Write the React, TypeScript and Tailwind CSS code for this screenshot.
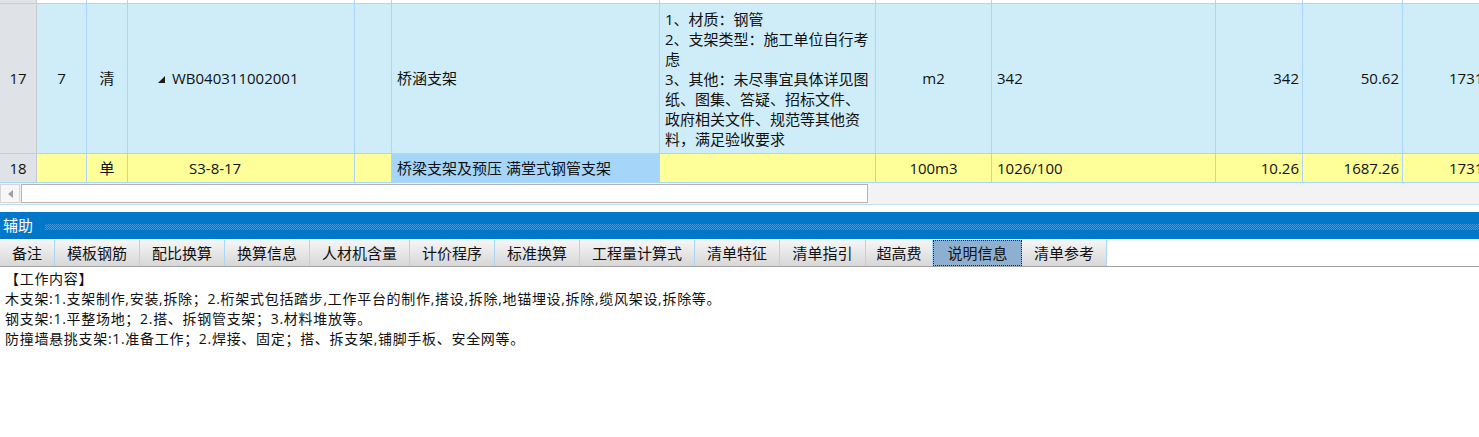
import React from 'react';

const FONT = { fontFamily: '"Open Sans", "Noto Sans CJK SC", sans-serif' };

// column widths include the 1px right border
const COLS = ['w-[37px]', 'w-[50px]', 'w-[41px]', 'w-[227px]', 'w-[37px]', 'w-[268px]', 'w-[216px]', 'w-[116px]', 'w-[224px]', 'w-[87px]', 'w-[100px]', 'w-[114px]'];

const FEATURE = [
  '1、材质：钢管',
  '2、支架类型：施工单位自行考',
  '虑',
  '3、其他：未尽事宜具体详见图',
  '纸、图集、答疑、招标文件、',
  '政府相关文件、规范等其他资',
  '料，满足验收要求',
];

const TABS: Array<{ label: string; w: string; active?: boolean }> = [
  { label: '备注', w: 'w-[55px]' },
  { label: '模板钢筋', w: 'w-[85px]' },
  { label: '配比换算', w: 'w-[85px]' },
  { label: '换算信息', w: 'w-[85px]' },
  { label: '人材机含量', w: 'w-[100px]' },
  { label: '计价程序', w: 'w-[85px]' },
  { label: '标准换算', w: 'w-[85px]' },
  { label: '工程量计算式', w: 'w-[115px]' },
  { label: '清单特征', w: 'w-[85px]' },
  { label: '清单指引', w: 'w-[86px]' },
  { label: '超高费', w: 'w-[67px]' },
  { label: '说明信息', w: 'w-[89px]', active: true },
  { label: '清单参考', w: 'w-[85px]' },
];

function Cell({ i, className = '', children }: { i: number; className?: string; children?: React.ReactNode }) {
  return (
    <div className={`${COLS[i]} shrink-0 h-full border-r border-[#acd6f8] flex items-center overflow-hidden whitespace-nowrap ${className}`}>
      {children}
    </div>
  );
}

function Triangle() {
  return (
    <svg width="7" height="7" viewBox="0 0 7 7" className="mr-[7px] mt-[1px]">
      <polygon points="7,0 7,7 0,7" fill="#1a1a1a" />
    </svg>
  );
}

export default function App() {
  return (
    <div className="w-[1479px] h-[437px] overflow-hidden bg-white text-[#111] flex flex-col" style={FONT}>
      {/* grid */}
      <div className="flex flex-col text-[15px]">
        <div className="flex h-[4px] border-b border-[#acd6f8]">
          <Cell i={0} className="bg-[#dfe2e7] border-[#c6c9d0]" />
          {COLS.slice(1).map((_, k) => (
            <Cell key={k} i={k + 1} />
          ))}
        </div>

        <div className="flex h-[150px] border-b border-[#acd6f8] bg-[#cfedf9]">
          <Cell i={0} className="bg-[#dfe2e7] border-[#c6c9d0] justify-center">17</Cell>
          <Cell i={1} className="justify-center">7</Cell>
          <Cell i={2} className="justify-center">清</Cell>
          <Cell i={3} className="pl-[30px]"><Triangle />WB040311002001</Cell>
          <Cell i={4} />
          <Cell i={5} className="pl-[5px]">桥涵支架</Cell>
          <Cell i={6} className="pl-[5px]">
            <div className="leading-[20px]">
              {FEATURE.map((l) => (
                <div key={l}>{l}</div>
              ))}
            </div>
          </Cell>
          <Cell i={7} className="justify-center">m2</Cell>
          <Cell i={8} className="pl-[5px]">342</Cell>
          <Cell i={9} className="justify-end pr-[3px]">342</Cell>
          <Cell i={10} className="justify-end pr-[3px]">50.62</Cell>
          <Cell i={11} className="justify-end pr-[3px]">17312.04</Cell>
        </div>

        <div className="flex h-[29px] border-b border-[#acd6f8] bg-[#ffff99]">
          <Cell i={0} className="bg-[#dfe2e7] border-[#c6c9d0] justify-center">18</Cell>
          <Cell i={1} />
          <Cell i={2} className="justify-center">单</Cell>
          <Cell i={3} className="pl-[61px]">S3-8-17</Cell>
          <Cell i={4} />
          <Cell i={5} className="pl-[5px] bg-[#a6d5fa]">桥梁支架及预压 满堂式钢管支架</Cell>
          <Cell i={6} />
          <Cell i={7} className="justify-center">100m3</Cell>
          <Cell i={8} className="pl-[5px]">1026/100</Cell>
          <Cell i={9} className="justify-end pr-[3px]">10.26</Cell>
          <Cell i={10} className="justify-end pr-[3px]">1687.26</Cell>
          <Cell i={11} className="justify-end pr-[3px]">17311.29</Cell>
        </div>
      </div>

      {/* horizontal scrollbar */}
      <div className="flex h-[22px] bg-[#f3f3f3] border-b border-[#c4e0f7] pt-[1px] pb-[1px]">
        <div className="w-[20px] h-full flex items-center justify-center border border-[#d6d6d6] bg-[#f7f7f7]">
          <svg width="5" height="8" viewBox="0 0 5 8">
            <polygon points="5,0 5,8 0,4" fill="#a0a0a0" />
          </svg>
        </div>
        <div className="w-[847px] h-full ml-[1px] bg-white border border-[#b4b4b4]" />
      </div>
      <div className="h-[7px] bg-white" />

      {/* 辅助 header */}
      <div className="h-[27px] bg-[#0177c9] flex items-center text-white text-[15px]">
        <span className="pl-[3px] w-[45px]">辅助</span>
        <div className="flex-1 h-[6px] mt-[3px] bg-[repeating-conic-gradient(#3f97dc_0_25%,#0177c9_0_50%)] bg-[length:2px_2px]" />
      </div>

      {/* tabs */}
      <div className="flex h-[28px] pt-[1px] border-b border-[#a3a3a3] text-[15px]">
        {TABS.map((t) =>
          t.active ? (
            <div key={t.label} className={`${t.w} shrink-0 h-full flex items-center justify-center bg-[#8db0d0] border border-dotted border-[#1d2a3a]`}>
              {t.label}
            </div>
          ) : (
            <div key={t.label} className={`${t.w} shrink-0 h-full flex items-center justify-center bg-gradient-to-b from-[#f6f6f6] to-[#d7d7d7] border-r border-[#acd6f8]`}>
              {t.label}
            </div>
          )
        )}
      </div>

      {/* description */}
      <div className="pl-[5px] pt-[2px] text-[14px] leading-[20px] tracking-[0.7px]">
        <div>【工作内容】</div>
        <div>木支架:1.支架制作,安装,拆除；2.桁架式包括踏步,工作平台的制作,搭设,拆除,地锚埋设,拆除,缆风架设,拆除等。</div>
        <div>钢支架:1.平整场地；2.搭、拆钢管支架；3.材料堆放等。</div>
        <div>防撞墙悬挑支架:1.准备工作；2.焊接、固定；搭、拆支架,铺脚手板、安全网等。</div>
      </div>
    </div>
  );
}
